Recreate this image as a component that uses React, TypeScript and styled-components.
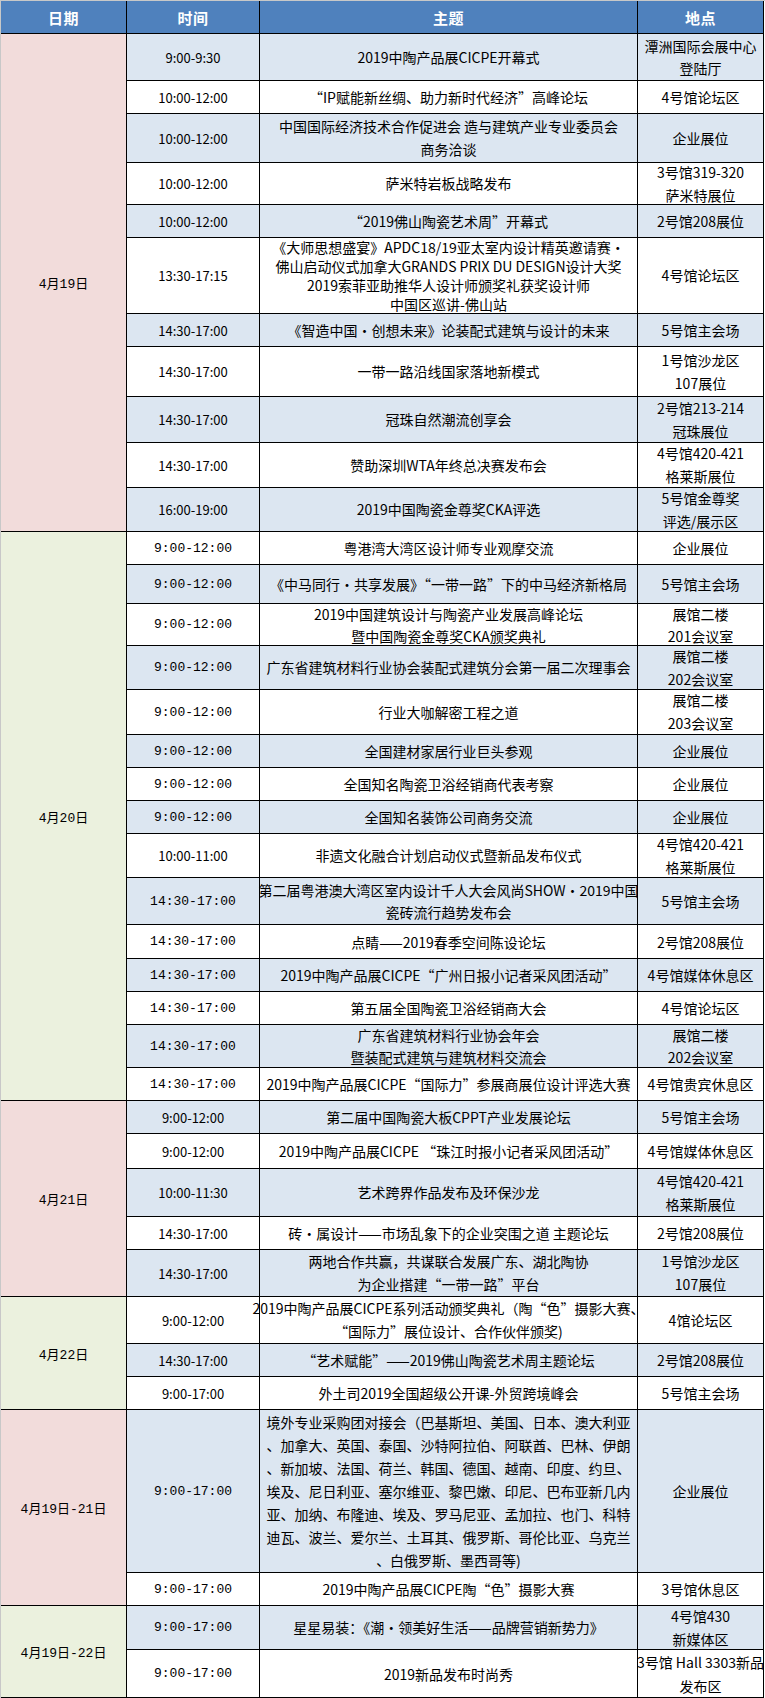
import React from 'react';
import styled, { createGlobalStyle } from 'styled-components';

type Item = {
  time: string;
  topic: string[];
  place: string[];
  h: number;
  mono?: boolean;
  lh?: number;
};

type Group = {
  date: string;
  tone: 'pink' | 'green';
  rows: Item[];
};

const groups: Group[] = [
  {
    date: '4月19日',
    tone: 'pink',
    rows: [
      { time: '9:00-9:30', topic: ['2019中陶产品展CICPE开幕式'], place: ['潭洲国际会展中心', '登陆厅'], h: 47 },
      { time: '10:00-12:00', topic: ['“IP赋能新丝绸、助力新时代经济”高峰论坛'], place: ['4号馆论坛区'], h: 33 },
      { time: '10:00-12:00', topic: ['中国国际经济技术合作促进会 造与建筑产业专业委员会', '商务洽谈'], place: ['企业展位'], h: 49, lh: 23 },
      { time: '10:00-12:00', topic: ['萨米特岩板战略发布'], place: ['3号馆319-320', '萨米特展位'], h: 42, lh: 23 },
      { time: '10:00-12:00', topic: ['“2019佛山陶瓷艺术周”开幕式'], place: ['2号馆208展位'], h: 33 },
      {
        time: '13:30-17:15',
        topic: [
          '《大师思想盛宴》APDC18/19亚太室内设计精英邀请赛·',
          '佛山启动仪式加拿大GRANDS PRIX DU DESIGN设计大奖',
          '2019索菲亚助推华人设计师颁奖礼获奖设计师',
          '中国区巡讲-佛山站',
        ],
        place: ['4号馆论坛区'],
        h: 76,
        lh: 19,
      },
      { time: '14:30-17:00', topic: ['《智造中国•创想未来》论装配式建筑与设计的未来'], place: ['5号馆主会场'], h: 33 },
      { time: '14:30-17:00', topic: ['一带一路沿线国家落地新模式'], place: ['1号馆沙龙区', '107展位'], h: 50, lh: 23 },
      { time: '14:30-17:00', topic: ['冠珠自然潮流创享会'], place: ['2号馆213-214', '冠珠展位'], h: 46, lh: 23 },
      { time: '14:30-17:00', topic: ['赞助深圳WTA年终总决赛发布会'], place: ['4号馆420-421', '格莱斯展位'], h: 45, lh: 23 },
      { time: '16:00-19:00', topic: ['2019中国陶瓷金尊奖CKA评选'], place: ['5号馆金尊奖', '评选/展示区'], h: 44, lh: 23 },
    ],
  },
  {
    date: '4月20日',
    tone: 'green',
    rows: [
      { time: '9:00-12:00', mono: true, topic: ['粤港湾大湾区设计师专业观摩交流'], place: ['企业展位'], h: 33 },
      { time: '9:00-12:00', mono: true, topic: ['《中马同行·共享发展》“一带一路”下的中马经济新格局'], place: ['5号馆主会场'], h: 39 },
      { time: '9:00-12:00', mono: true, topic: ['2019中国建筑设计与陶瓷产业发展高峰论坛', '暨中国陶瓷金尊奖CKA颁奖典礼'], place: ['展馆二楼', '201会议室'], h: 42 },
      { time: '9:00-12:00', mono: true, topic: ['广东省建筑材料行业协会装配式建筑分会第一届二次理事会'], place: ['展馆二楼', '202会议室'], h: 44, lh: 23 },
      { time: '9:00-12:00', mono: true, topic: ['行业大咖解密工程之道'], place: ['展馆二楼', '203会议室'], h: 45, lh: 23 },
      { time: '9:00-12:00', mono: true, topic: ['全国建材家居行业巨头参观'], place: ['企业展位'], h: 33 },
      { time: '9:00-12:00', mono: true, topic: ['全国知名陶瓷卫浴经销商代表考察'], place: ['企业展位'], h: 33 },
      { time: '9:00-12:00', mono: true, topic: ['全国知名装饰公司商务交流'], place: ['企业展位'], h: 33 },
      { time: '10:00-11:00', topic: ['非遗文化融合计划启动仪式暨新品发布仪式'], place: ['4号馆420-421', '格莱斯展位'], h: 44, lh: 23 },
      {
        time: '14:30-17:00',
        mono: true,
        topic: ['第二届粤港澳大湾区室内设计千人大会风尚SHOW•2019中国', '瓷砖流行趋势发布会'],
        place: ['5号馆主会场'],
        h: 47,
      },
      { time: '14:30-17:00', mono: true, topic: ['点睛——2019春季空间陈设论坛'], place: ['2号馆208展位'], h: 34 },
      { time: '14:30-17:00', mono: true, topic: ['2019中陶产品展CICPE“广州日报小记者采风团活动”'], place: ['4号馆媒体休息区'], h: 33 },
      { time: '14:30-17:00', mono: true, topic: ['第五届全国陶瓷卫浴经销商大会'], place: ['4号馆论坛区'], h: 33 },
      {
        time: '14:30-17:00',
        mono: true,
        topic: ['广东省建筑材料行业协会年会', '暨装配式建筑与建筑材料交流会'],
        place: ['展馆二楼', '202会议室'],
        h: 43,
      },
      { time: '14:30-17:00', mono: true, topic: ['2019中陶产品展CICPE“国际力”参展商展位设计评选大赛'], place: ['4号馆贵宾休息区'], h: 33 },
    ],
  },
  {
    date: '4月21日',
    tone: 'pink',
    rows: [
      { time: '9:00-12:00', topic: ['第二届中国陶瓷大板CPPT产业发展论坛'], place: ['5号馆主会场'], h: 33 },
      { time: '9:00-12:00', topic: ['2019中陶产品展CICPE “珠江时报小记者采风团活动”'], place: ['4号馆媒体休息区'], h: 35 },
      { time: '10:00-11:30', topic: ['艺术跨界作品发布及环保沙龙'], place: ['4号馆420-421', '格莱斯展位'], h: 48, lh: 23 },
      { time: '14:30-17:00', topic: ['砖•属设计——市场乱象下的企业突围之道 主题论坛'], place: ['2号馆208展位'], h: 33 },
      {
        time: '14:30-17:00',
        topic: ['两地合作共赢，共谋联合发展广东、湖北陶协', '为企业搭建“一带一路”平台'],
        place: ['1号馆沙龙区', '107展位'],
        h: 47,
        lh: 23,
      },
    ],
  },
  {
    date: '4月22日',
    tone: 'green',
    rows: [
      {
        time: '9:00-12:00',
        topic: ['2019中陶产品展CICPE系列活动颁奖典礼（陶“色”摄影大赛、', '“国际力”展位设计、合作伙伴颁奖)'],
        place: ['4馆论坛区'],
        h: 47,
        lh: 23,
      },
      { time: '14:30-17:00', topic: ['“艺术赋能”——2019佛山陶瓷艺术周主题论坛'], place: ['2号馆208展位'], h: 33 },
      { time: '9:00-17:00', topic: ['外土司2019全国超级公开课-外贸跨境峰会'], place: ['5号馆主会场'], h: 33 },
    ],
  },
  {
    date: '4月19日-21日',
    tone: 'pink',
    rows: [
      {
        time: '9:00-17:00',
        mono: true,
        topic: [
          '境外专业采购团对接会（巴基斯坦、美国、日本、澳大利亚',
          '、加拿大、英国、泰国、沙特阿拉伯、阿联酋、巴林、伊朗',
          '、新加坡、法国、荷兰、韩国、德国、越南、印度、约旦、',
          '埃及、尼日利亚、塞尔维亚、黎巴嫩、印尼、巴布亚新几内',
          '亚、加纳、布隆迪、埃及、罗马尼亚、孟加拉、也门、科特',
          '迪瓦、波兰、爱尔兰、土耳其、俄罗斯、哥伦比亚、乌克兰',
          '、白俄罗斯、墨西哥等)',
        ],
        place: ['企业展位'],
        h: 163,
        lh: 23,
      },
      { time: '9:00-17:00', mono: true, topic: ['2019中陶产品展CICPE陶“色”摄影大赛'], place: ['3号馆休息区'], h: 33 },
    ],
  },
  {
    date: '4月19日-22日',
    tone: 'green',
    rows: [
      { time: '9:00-17:00', mono: true, topic: ['星星易装：《潮·领美好生活——品牌营销新势力》'], place: ['4号馆430', '新媒体区'], h: 44, lh: 23 },
      { time: '9:00-17:00', mono: true, topic: ['2019新品发布时尚秀'], place: ['3号馆 Hall 3303新品', '发布区'], h: 48, lh: 24 },
    ],
  },
];

const tones = {
  pink: '#F2DCDB',
  green: '#EBF1DE',
};

const monoStack = '"Liberation Mono", "Noto Sans CJK SC", monospace';
const sansStack = '"Noto Sans CJK SC", "Noto Sans", sans-serif';

const GlobalStyle = createGlobalStyle`
  html, body {
    margin: 0;
    padding: 0;
    background: #ffffff;
  }
  body {
    font-family: ${sansStack};
    color: #000000;
  }
`;

const Sheet = styled.div<{ $rows: string }>`
  display: grid;
  grid-template-columns: 126px 133px 378px 126px;
  grid-template-rows: ${({ $rows }) => $rows};
  width: 764px;
  border-top: 1px solid #c8c8c8;
  border-left: 1px solid #c8c8c8;
`;

const Cell = styled.div`
  display: flex;
  align-items: center;
  justify-content: center;
  text-align: center;
  box-sizing: border-box;
  border-right: 1px solid #000000;
  border-bottom: 1px solid #000000;
  white-space: nowrap;
  min-width: 0;
  min-height: 0;
`;

const HeadCell = styled(Cell)`
  background: #4f81bd;
  color: #ffffff;
  font-size: 15px;
  font-weight: 700;
  letter-spacing: 0.5px;
`;

const DateCell = styled(Cell)<{ $tone: 'pink' | 'green'; $span: number }>`
  grid-row: span ${({ $span }) => $span};
  background: ${({ $tone }) => tones[$tone]};
  font-family: ${monoStack};
  font-size: 13px;
`;

const BodyCell = styled(Cell)<{ $shade: boolean }>`
  background: ${({ $shade }) => ($shade ? '#DCE6F1' : '#ffffff')};
  font-size: 14px;
`;

const TimeCell = styled(BodyCell)<{ $mono?: boolean }>`
  font-family: ${({ $mono }) => ($mono ? monoStack : sansStack)};
  font-size: 13px;
`;

const Lines = styled.span<{ $lh: number }>`
  display: block;
  line-height: ${({ $lh }) => $lh}px;
`;

function Text({ lines, lh }: { lines: string[]; lh: number }) {
  return (
    <Lines $lh={lh}>
      {lines.map((line, i) => (
        <React.Fragment key={i}>
          {line}
          {i < lines.length - 1 && <br />}
        </React.Fragment>
      ))}
    </Lines>
  );
}

export default function App() {
  const heights = [33];
  groups.forEach((g) => g.rows.forEach((r) => heights.push(r.h)));
  const rowTemplate = heights.map((h) => `${h}px`).join(' ');

  let index = 0;

  return (
    <>
      <GlobalStyle />
      <Sheet $rows={rowTemplate}>
        <HeadCell>日期</HeadCell>
        <HeadCell>时间</HeadCell>
        <HeadCell>主题</HeadCell>
        <HeadCell>地点</HeadCell>

        {groups.map((g) => (
          <React.Fragment key={g.date}>
            <DateCell $tone={g.tone} $span={g.rows.length}>
              {g.date}
            </DateCell>
            {g.rows.map((r, i) => {
              index += 1;
              const shade = index % 2 === 1;
              const lh = r.lh ?? 22;
              return (
                <React.Fragment key={i}>
                  <TimeCell $shade={shade} $mono={r.mono}>
                    {r.time}
                  </TimeCell>
                  <BodyCell $shade={shade}>
                    <Text lines={r.topic} lh={lh} />
                  </BodyCell>
                  <BodyCell $shade={shade}>
                    <Text lines={r.place} lh={lh} />
                  </BodyCell>
                </React.Fragment>
              );
            })}
          </React.Fragment>
        ))}
      </Sheet>
    </>
  );
}
